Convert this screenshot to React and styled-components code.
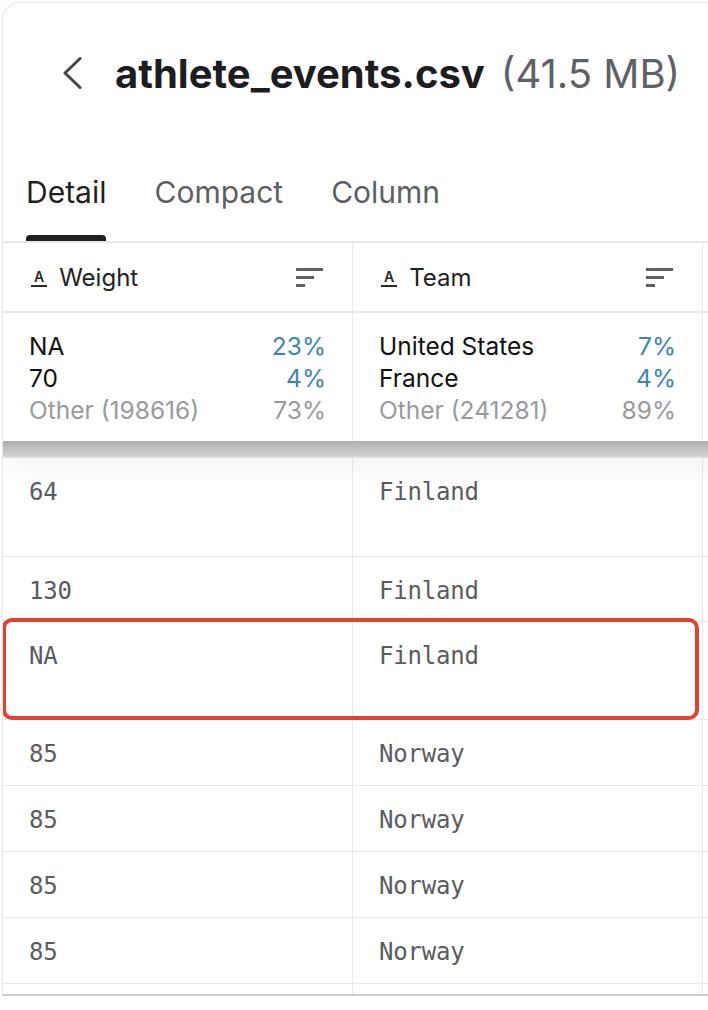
import React from 'react';
import styled, { createGlobalStyle } from 'styled-components';

const GlobalStyle = createGlobalStyle`
    html, body {
        margin: 0;
        padding: 0;
        background: #fff;
        overflow: hidden;
    }
    body {
        font-family: Inter, "Noto Sans", sans-serif;
    }
`;

const columns = [
    {
        name: 'Weight',
        top: [
            { label: 'NA', pct: '23%' },
            { label: '70', pct: '4%' },
        ],
        other: { label: 'Other (198616)', pct: '73%' },
    },
    {
        name: 'Team',
        top: [
            { label: 'United States', pct: '7%' },
            { label: 'France', pct: '4%' },
        ],
        other: { label: 'Other (241281)', pct: '89%' },
    },
];

const rows = [
    { weight: '64', team: 'Finland', height: 99 },
    { weight: '130', team: 'Finland', height: 65 },
    { weight: 'NA', team: 'Finland', height: 98, marked: true },
    { weight: '85', team: 'Norway', height: 66 },
    { weight: '85', team: 'Norway', height: 66 },
    { weight: '85', team: 'Norway', height: 66 },
    { weight: '85', team: 'Norway', height: 66 },
    { weight: '', team: '', height: 66 },
];

const App = () => {
    return (
        <>
            <GlobalStyle />
            <Card>
                <TitleBar>
                    <BackButton aria-label="Back">
                        <svg width="20" height="32" viewBox="0 0 20 32">
                            <path d="M18 1.5 L3 16 L18 30.5" fill="none" stroke="#464646" strokeWidth="3" strokeLinecap="round" strokeLinejoin="round" />
                        </svg>
                    </BackButton>
                    <FileName>athlete_events.csv</FileName>
                    <FileSize>(41.5 MB)</FileSize>
                </TitleBar>

                <Tabs>
                    <Tab $active>Detail<TabBar $active /></Tab>
                    <Tab>Compact<TabBar /></Tab>
                    <Tab>Column<TabBar /></Tab>
                </Tabs>

                <Table>
                    <StickyHead>
                        <HeadRow>
                            {columns.map((col) => (
                                <HeadCell key={col.name}>
                                    <TypeIcon>A</TypeIcon>
                                    <HeadName>{col.name}</HeadName>
                                    <SortIcon>
                                        <span style={{ width: 27 }} />
                                        <span style={{ width: 18 }} />
                                        <span style={{ width: 9 }} />
                                    </SortIcon>
                                </HeadCell>
                            ))}
                            <HeadCell />
                        </HeadRow>
                        <SummaryRow>
                            {columns.map((col) => (
                                <SummaryCell key={col.name}>
                                    {col.top.map((t) => (
                                        <SummaryLine key={t.label}>
                                            <span>{t.label}</span>
                                            <Pct>{t.pct}</Pct>
                                        </SummaryLine>
                                    ))}
                                    <SummaryLine $muted>
                                        <span>{col.other.label}</span>
                                        <span>{col.other.pct}</span>
                                    </SummaryLine>
                                </SummaryCell>
                            ))}
                            <SummaryCell />
                        </SummaryRow>
                        <ShadowBand />
                    </StickyHead>

                    {rows.map((r, i) => (
                        <DataRow key={i} $height={r.height}>
                            <DataCell>{r.weight}</DataCell>
                            <DataCell>{r.team}</DataCell>
                            <DataCell />
                            {r.marked && <Highlight />}
                        </DataRow>
                    ))}
                </Table>
            </Card>
        </>
    );
};

const Card = styled.div`
    margin: 2px 0 0 2px;
    width: 780px;
    height: 994px;
    box-sizing: border-box;
    border-top: 1.5px solid #e6e6e8;
    border-left: 1.5px solid #e6e6e8;
    border-bottom: 2px solid #cdcdcf;
    border-top-left-radius: 18px;
    overflow: hidden;
    display: flex;
    flex-direction: column;
    background: #fff;
`;

const TitleBar = styled.div`
    height: 140px;
    flex-shrink: 0;
    display: flex;
    align-items: center;
    padding-left: 59px;
`;

const BackButton = styled.div`
    width: 20px;
    height: 32px;
    display: flex;
    margin-right: 33px;
`;

const FileName = styled.h1`
    margin: 0;
    font-size: 40px;
    font-weight: 700;
    color: #1d1d1f;
`;

const FileSize = styled.span`
    margin-left: 16px;
    font-size: 40px;
    font-weight: 400;
    color: #606166;
`;

const Tabs = styled.div`
    height: 98px;
    flex-shrink: 0;
    display: flex;
    gap: 48px;
    padding-left: 23px;
`;

const Tab = styled.div`
    display: inline-flex;
    flex-direction: column;
    padding-top: 31px;
    font-size: 30px;
    line-height: 36px;
    color: ${(p) => (p.$active ? '#1f1f1f' : '#5c5f64')};
`;

const TabBar = styled.div`
    height: 6px;
    margin-top: 25px;
    border-radius: 4px 4px 0 0;
    background: ${(p) => (p.$active ? '#1f1f21' : 'transparent')};
`;

const Table = styled.div`
    border-top: 2px solid #e6e6e8;
    flex: 1;
    overflow: hidden;
`;

const StickyHead = styled.div`
    position: relative;
    z-index: 1;
    background: #fff;
`;

const grid = `
    display: grid;
    grid-template-columns: 350px 350px 350px;
`;

const HeadRow = styled.div`
    ${grid}
    height: 70px;
    box-sizing: border-box;
    border-bottom: 2px solid #e8e8ea;
`;

const HeadCell = styled.div`
    display: flex;
    align-items: center;
    padding: 0 29px 0 28px;
    border-right: 1.5px solid #e8e8ea;
    color: #222;
`;

const TypeIcon = styled.span`
    font-size: 14px;
    font-weight: 600;
    line-height: 15px;
    color: #2a2a2a;
    border-bottom: 2px solid #2a2a2a;
    padding: 0 3px 1px;
    margin-right: 12px;
    margin-top: 2px;
`;

const HeadName = styled.span`
    flex: 1;
    font-size: 24px;
`;

const SortIcon = styled.div`
    width: 27px;
    display: flex;
    flex-direction: column;
    gap: 5px;

    span {
        display: block;
        height: 3px;
        background: #5f6166;
    }
`;

const SummaryRow = styled.div`
    ${grid}
    height: 128px;
`;

const SummaryCell = styled.div`
    padding: 17px 26px 0 26px;
    border-right: 1.5px solid #e8e8ea;
`;

const SummaryLine = styled.div`
    display: flex;
    justify-content: space-between;
    font-size: 24.5px;
    line-height: 32px;
    color: ${(p) => (p.$muted ? '#999a9c' : '#111')};
`;

const Pct = styled.span`
    color: #3c86b4;
`;

const ShadowBand = styled.div`
    height: 17px;
    background: linear-gradient(#aeaeb0, #cfcfd1 85%, #e2e2e4);
    box-shadow: 0 10px 22px -4px rgba(0, 0, 0, 0.1);
`;

const DataRow = styled.div`
    ${grid}
    position: relative;
    height: ${(p) => p.$height}px;
    box-sizing: border-box;
    border-bottom: 1.5px solid #e8e8ea;
`;

const DataCell = styled.div`
    padding: 22px 26px 0 26px;
    border-right: 1.5px solid #e8e8ea;
    font-family: "DejaVu Sans Mono", "Liberation Mono", monospace;
    font-size: 24px;
    line-height: 24px;
    color: #595c61;
    letter-spacing: -0.2px;
`;

const Highlight = styled.div`
    position: absolute;
    top: -4px;
    left: -1px;
    width: 697px;
    bottom: -1px;
    box-sizing: border-box;
    border: 4px solid #e3432e;
    border-radius: 10px;
    pointer-events: none;
`;

export default App;
